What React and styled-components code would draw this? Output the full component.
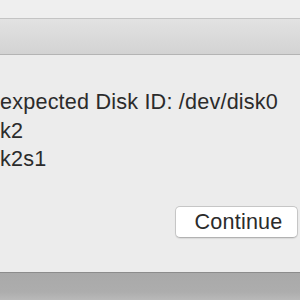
import React from "react";
import styled, { createGlobalStyle } from "styled-components";

const GlobalStyle = createGlobalStyle`
  html, body {
    margin: 0;
    padding: 0;
    width: 300px;
    height: 300px;
    overflow: hidden;
    background: #ececec;
  }
`;

function App() {
  return (
    <>
      <GlobalStyle />
      <Screen>
        <TopStrip />
        <TitleBar />
        <Body>
          <Message>
            <Line>expected Disk ID: /dev/disk0</Line>
            <Line>k2</Line>
            <Line>k2s1</Line>
          </Message>
          <ButtonRow>
            <Button>Continue</Button>
          </ButtonRow>
        </Body>
        <Footer />
      </Screen>
    </>
  );
}

export default App;

const Screen = styled.div`
  width: 300px;
  height: 300px;
  display: flex;
  flex-direction: column;
  font-family: "Liberation Sans", Arial, sans-serif;
`;

const TopStrip = styled.div`
  height: 18px;
  background: #efefef;
  border-bottom: 1px solid #c4c4c4;
`;

const TitleBar = styled.div`
  height: 35px;
  background: linear-gradient(#e2e2e2, #d3d3d3);
  border-bottom: 1px solid #b4b4b4;
`;

const Body = styled.div`
  flex: 1;
  background: #ececec;
  padding-top: 33px;
  display: flex;
  flex-direction: column;
`;

const Message = styled.div`
  color: #2b2b2b;
  font-size: 21.6px;
  letter-spacing: 0.2px;
  line-height: 28.5px;
`;

const Line = styled.div`
  white-space: nowrap;
`;

const ButtonRow = styled.div`
  display: flex;
  justify-content: flex-end;
  padding-right: 2px;
  margin-top: 32px;
`;

const Button = styled.div`
  width: 117px;
  height: 30px;
  padding-left: 4px;
  background: #fff;
  border: 1px solid #c6c6c6;
  border-bottom-color: #b2b2b2;
  border-radius: 5px;
  box-shadow: 0 1px 1px rgba(0, 0, 0, 0.08);
  display: flex;
  align-items: center;
  justify-content: center;
  color: #2b2b2b;
  font-size: 21.6px;
  letter-spacing: 0.2px;
`;

const Footer = styled.div`
  height: 27px;
  border-top: 1px solid #8c8c8c;
  background: linear-gradient(#a9a9a9 0%, #adadad 70%, #b9b9b9 100%);
`;
